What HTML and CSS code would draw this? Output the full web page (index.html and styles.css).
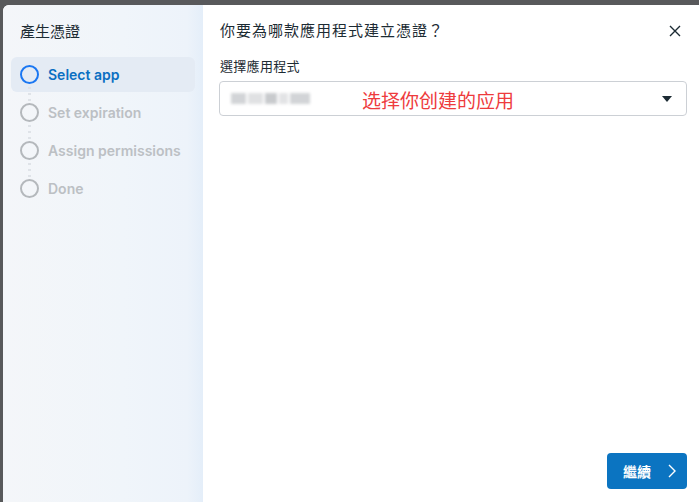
FILE: index.html
```html
<!DOCTYPE html>
<html lang="zh-Hant">
<head>
    <meta charset="UTF-8">
    <meta name="viewport" content="width=device-width, initial-scale=1.0">
    <title>產生憑證</title>
    <link rel="stylesheet" href="styles.css">
</head>
<body>
    <div class="dialog">
        <aside class="sidebar">
            <h2 class="sidebar-title">產生憑證</h2>
            <ol class="steps">
                <li class="step active"><span class="dot"></span>Select app</li>
                <li class="step"><span class="dot"></span>Set expiration</li>
                <li class="step"><span class="dot"></span>Assign permissions</li>
                <li class="step last"><span class="dot"></span>Done</li>
            </ol>
        </aside>

        <main class="content">
            <div class="header">
                <h1>你要為哪款應用程式建立憑證？</h1>
                <button class="close" aria-label="關閉">
                    <svg width="12" height="12" viewBox="0 0 12 12">
                        <path d="M1 1L11 11M11 1L1 11" stroke="#1c2b33" stroke-width="1.4" fill="none"/>
                    </svg>
                </button>
            </div>

            <label class="field-label">選擇應用程式</label>
            <div class="select">
                <span class="select-value">
                    <i></i><i></i><i></i><i></i><i></i>
                </span>
                <span class="caret"></span>
                <span class="note">选择你创建的应用</span>
            </div>

            <div class="footer">
                <button class="primary">繼續
                    <svg width="8" height="14" viewBox="0 0 8 14">
                        <path d="M1 1L7 7L1 13" stroke="#fff" stroke-width="1.4" fill="none"/>
                    </svg>
                </button>
            </div>
        </main>
    </div>
</body>
</html>
```

FILE: styles.css
```css
* {
    box-sizing: border-box;
}

body {
    margin: 0;
    height: 502px;
    padding: 5px 0 0 3px;
    display: flex;
    background: #58595b;
    font-family: Inter, "Noto Sans CJK TC", sans-serif;
    color: #1c2b33;
    overflow: hidden;
}

.dialog {
    flex: 1;
    display: flex;
    background: #fff;
    border-top-left-radius: 6px;
    overflow: hidden;
}

/* Left column with the wizard steps */
.sidebar {
    width: 200px;
    padding: 16px 8px 0 8px;
    background: linear-gradient(90deg, #f4f6f9 0%, #f0f5fa 60%, #edf3fa 92%, #e4eef9 100%);
}

.sidebar-title {
    margin: 0 0 16px 9px;
    font-size: 15px;
    line-height: 20px;
    font-weight: 400;
    font-family: "Noto Sans CJK TC", sans-serif;
}

.steps {
    list-style: none;
    margin: 0;
    padding: 0;
    display: flex;
    flex-direction: column;
    gap: 3px;
}

.step {
    position: relative;
    height: 35px;
    display: flex;
    align-items: center;
    gap: 9px;
    padding-left: 9px;
    border-radius: 6px;
    font-size: 14px;
    font-weight: 600;
    color: #bcc0c4;
}

/* dotted line joining one step to the next */
.step:not(.last)::after {
    content: '';
    position: absolute;
    left: 17px;
    top: 28px;
    width: 3px;
    height: 20px;
    background: radial-gradient(circle, #dfe3e8 1.2px, transparent 1.5px) 0 0 / 3px 6px repeat-y;
}

.step.active {
    background: #e4ebf4;
    color: #0a6fc2;
}

.dot {
    width: 19px;
    height: 19px;
    border-radius: 50%;
    border: 2px solid #b4b8bc;
    flex-shrink: 0;
}

.step.active .dot {
    border-color: #1a77f2;
}

/* Right side form */
.content {
    flex: 1;
    display: flex;
    flex-direction: column;
    padding: 16px 12px 13px 17px;
}

.header {
    display: flex;
    align-items: center;
    justify-content: space-between;
    height: 20px;
}

.header h1 {
    margin: 0;
    font-size: 15px;
    line-height: 20px;
    font-weight: 400;
    letter-spacing: 1px;
}

.close {
    border: none;
    background: none;
    padding: 0;
    margin-right: 6px;
    display: flex;
}

.field-label {
    margin-top: 16px;
    font-size: 13px;
    line-height: 18px;
    letter-spacing: 0.3px;
    font-family: "Noto Sans CJK TC", sans-serif;
}

.select {
    position: relative;
    margin-top: 6px;
    margin-left: -1px;
    height: 35px;
    border: 1px solid #ccd0d5;
    border-radius: 4px;
    display: flex;
    align-items: center;
    justify-content: space-between;
    padding: 0 14px 0 11px;
}

.select-value {
    display: flex;
    gap: 2px;
    filter: blur(1.6px);
    margin-bottom: 1px;
}

.select-value i {
    display: block;
    width: 15px;
    height: 11px;
    background: #d2d4d7;
}

.select-value i:nth-child(2) { background: #e0e1e3; }
.select-value i:nth-child(3) { width: 12px; background: #c8cacd; }
.select-value i:nth-child(4) { width: 9px; background: #e2e3e5; }
.select-value i:nth-child(5) { width: 20px; }

.caret {
    width: 0;
    height: 0;
    border-left: 5.5px solid transparent;
    border-right: 5.5px solid transparent;
    border-top: 6px solid #1c2b33;
}

/* red annotation written over the field */
.note {
    position: absolute;
    left: 142px;
    top: 6px;
    font-size: 19px;
    line-height: 24px;
    color: #ee3b3d;
    font-family: "Noto Sans CJK SC", sans-serif;
}

.footer {
    margin-top: auto;
    display: flex;
    justify-content: flex-end;
}

.primary {
    width: 80px;
    height: 36px;
    border: none;
    border-radius: 4px;
    background: #0b74c1;
    color: #fff;
    font-size: 14px;
    font-weight: 600;
    font-family: "Noto Sans CJK TC", sans-serif;
    display: flex;
    align-items: center;
    gap: 17px;
    padding-left: 16px;
}
```
